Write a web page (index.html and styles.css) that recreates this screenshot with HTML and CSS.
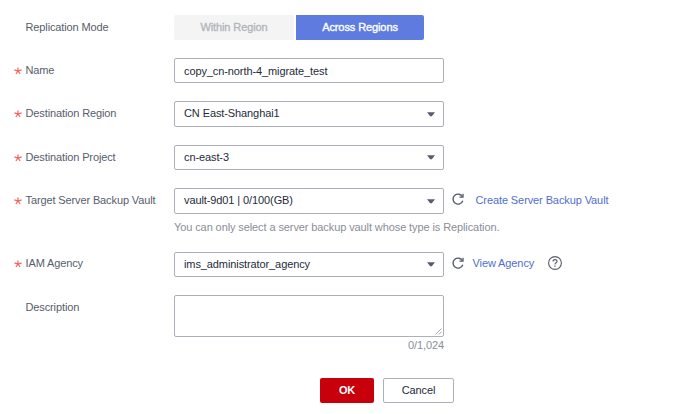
FILE: index.html
```html
<!DOCTYPE html>
<html lang="en">
<head>
<meta charset="utf-8">
<title>Replication</title>
<link rel="stylesheet" href="styles.css">
</head>
<body>
<svg class="defs" width="0" height="0">
  <symbol id="star" viewBox="0 0 8 8"><path d="M4 .5V4M.4 2.9 4 4l3.6-1.1M4 4 1.9 7M4 4l2.1 3" fill="none" stroke="#f8625c" stroke-width="1.2"/></symbol>
  <symbol id="caret" viewBox="0 0 8 5"><path d="M0 .3h8L5 4.1Q4 5 3 4.1Z" fill="#575d6c"/></symbol>
  <symbol id="refresh" viewBox="0 0 12 12"><path d="M10.6 4A5 5 0 1 0 10.8 7.8" fill="none" stroke="#575d6c" stroke-width="1.4"/><path d="M11 .8V4.2H7.4" fill="none" stroke="#575d6c" stroke-width="1.3"/></symbol>
</svg>
<form class="form">
  <div class="row">
    <span class="label">Replication Mode</span>
    <div class="tabs"><button type="button" class="tab off">Within Region</button><button type="button" class="tab on">Across Regions</button></div>
  </div>
  <div class="row">
    <span class="label"><svg class="star"><use href="#star"/></svg>Name</span>
    <div class="box low"><span>copy_cn-north-4_migrate_test</span></div>
  </div>
  <div class="row">
    <span class="label"><svg class="star"><use href="#star"/></svg>Destination Region</span>
    <div class="box tall"><span>CN East-Shanghai1</span><svg class="caret"><use href="#caret"/></svg></div>
  </div>
  <div class="row">
    <span class="label"><svg class="star"><use href="#star"/></svg>Destination Project</span>
    <div class="box"><span>cn-east-3</span><svg class="caret"><use href="#caret"/></svg></div>
  </div>
  <div class="row">
    <span class="label"><svg class="star"><use href="#star"/></svg>Target Server Backup Vault</span>
    <div class="box tall"><span>vault-9d01 | 0/100(GB)</span><svg class="caret"><use href="#caret"/></svg></div>
    <svg class="refresh"><use href="#refresh"/></svg>
    <a class="link create">Create Server Backup Vault</a>
  </div>
  <p class="hint">You can only select a server backup vault whose type is Replication.</p>
  <div class="row agency">
    <span class="label"><svg class="star"><use href="#star"/></svg>IAM Agency</span>
    <div class="box"><span>ims_administrator_agency</span><svg class="caret"><use href="#caret"/></svg></div>
    <svg class="refresh"><use href="#refresh"/></svg>
    <a class="link view">View Agency</a>
    <svg class="help" viewBox="0 0 14 14"><circle cx="7" cy="7" r="6.4" fill="none" stroke="#575d6c" stroke-width="1.1"/><path d="M5 5.6C5 3 9 3 9 5.4 9 6.8 7 6.8 7 8.4" fill="none" stroke="#575d6c" stroke-width="1.1"/><path d="M6.4 9.6h1.2v1.2H6.4z" fill="#575d6c"/></svg>
  </div>
  <div class="row">
    <span class="label">Description</span>
    <div class="area"><svg class="grip" viewBox="0 0 7 7"><path d="M.5 6.5l6-6M3.8 6.5l2.7-2.7" fill="none" stroke="#8a8e99" stroke-width=".8"/></svg></div>
  </div>
  <div class="count">0/1,024</div>
  <div class="actions"><button type="button" class="btn ok">OK</button><button type="button" class="btn cancel">Cancel</button></div>
</form>
</body>
</html>
```
FILE: styles.css
```css
* { box-sizing: border-box; }
body {
  margin: 0;
  background: #fff;
  font: 11px/25px "Liberation Sans", Arial, sans-serif;
  letter-spacing: -0.1px;
  color: #252b3a;
}
.defs { display: block; height: 0; }
.form { padding-top: 15px; white-space: nowrap; }
.row { display: flex; align-items: flex-start; margin-bottom: 18px; }
.label {
  display: flex;
  width: 174px;
  height: 25px;
  padding-left: 25.5px;
  letter-spacing: -0.12px;
  color: #575d6c;
}
.star { width: 8px; height: 8px; margin: 9px 3.5px 0 -11.5px; }
.tabs { display: flex; gap: 2px; }
button { font: inherit; letter-spacing: inherit; padding: 0; border: 0; }
.tab { height: 25px; -webkit-text-stroke: 0.35px currentColor; }
.off { width: 120px; background: #f4f4f4; color: #b3b6be; border-radius: 2px 0 0 2px; }
.on { width: 128px; background: #5e7ce0; color: #fff; border-radius: 0 2px 2px 0; }
.box {
  display: flex;
  justify-content: space-between;
  align-items: center;
  width: 270px;
  height: 25px;
  padding: 0 8px 0 9px;
  border: 1px solid #adb0b8;
  border-radius: 2px;
  line-height: 23px;
}
.tall { height: 26px; }
.tall span { padding-bottom: 1px; }
.low span { padding-top: 1px; }
.caret { width: 8px; height: 5px; }
.refresh { width: 12px; height: 12px; margin: 5px 0 0 8px; }
.link { color: #526ecc; }
.create { margin-left: 11.5px; }
.view { margin-left: 8.5px; }
.help { width: 14px; height: 14px; margin: 4px 0 0 13.5px; }
.hint { margin: -18px 0 0 174px; height: 26px; line-height: 26px; color: #8a8e99; }
.agency { margin-top: 12px; }
.agency .label, .agency .link { line-height: 23px; }
.agency .star { margin-top: 8px; }
.area {
  display: flex;
  justify-content: flex-end;
  align-items: flex-end;
  width: 270px;
  height: 42px;
  padding: 1px;
  border: 1px solid #adb0b8;
  border-radius: 2px;
}
.grip { width: 7px; height: 7px; }
.count { width: 444px; margin-top: -18px; height: 17px; line-height: 17px; text-align: right; color: #8a8e99; }
.actions { display: flex; gap: 9px; margin: 24px 0 0 320px; }
.btn { height: 25px; border-radius: 2px; }
.ok { width: 54px; background: #c7000b; color: #fff; font-weight: bold; letter-spacing: -0.3px; }
.cancel { width: 71px; padding-bottom: 1px; line-height: 22px; background: #fff; border: 1px solid #adb0b8; color: #252b3a; }
```
